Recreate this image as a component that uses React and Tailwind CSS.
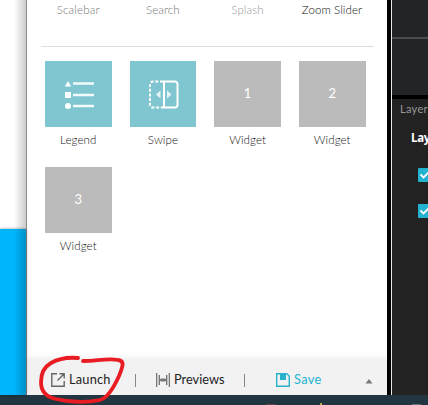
import React from "react";

const categories = [
  { name: "Scalebar", style: "text-[#777] tracking-[0.2px]" },
  { name: "Search", style: "text-[#777] tracking-[0.1px]" },
  { name: "Splash", style: "text-[#999] tracking-[0.1px]" },
  { name: "Zoom Slider", style: "text-[#111] tracking-[0.1px]" },
];

function LegendIcon() {
  return (
    <svg className="relative left-[2px] top-px" width="30" height="30" viewBox="0 0 30 30" fill="white">
      <path d="M3 1 6.2 6.5H-.2Z" />
      <rect x="0" y="12" width="6" height="6" />
      <circle cx="3" cy="26" r="3" />
      <path fillOpacity=".9" d="M8 2.3h21v2.4H8zM8 13.8h21v2.4H8zM8 24.8h21v2.4H8z" />
    </svg>
  );
}

function SwipeIcon() {
  return (
    <svg className="relative left-[1px] top-px" width="30" height="30" viewBox="0 0 30 30" fill="none" stroke="white" strokeWidth="2">
      <path d="M14 1.5H4a3 3 0 0 0-3 3v20a3 3 0 0 0 3 3h10" strokeDasharray="3 1.7" />
      <path d="M15 1.5h11a2.5 2.5 0 0 1 2.5 2.5v21a2.5 2.5 0 0 1-2.5 2.5H15Z" />
      <path d="M11.5 10.5v8L7 14.5ZM18 10.5v8l4.5-4Z" fill="white" fillOpacity=".8" stroke="none" />
    </svg>
  );
}

function Tile({ label, active, children }) {
  return (
    <div className="flex h-[106px] flex-col items-center">
      <div className={`flex h-[66px] w-full items-center justify-center text-[13px] text-white ${active ? "bg-[#80c6d0]" : "bg-[#bbb]"}`}>
        {children}
      </div>
      <span className="mt-[5px] text-[11.5px] font-light leading-4 tracking-[0.1px] text-[#111]">{label}</span>
    </div>
  );
}

function Check() {
  return (
    <div className="flex h-[14px] w-[14px] items-center justify-center rounded-[1px] bg-[#23b3d0]">
      <svg width="12" height="10" viewBox="0 0 12 10" fill="none" stroke="white" strokeWidth="1.8">
        <path d="m1.5 4.5 3 3 5.5-5.5" />
      </svg>
    </div>
  );
}

export default function App() {
  return (
    <div className="relative flex h-[405px] w-[428px] flex-col overflow-hidden bg-[#213640] font-['Lato','Open_Sans',sans-serif]">
      <div className="flex h-[395px] shrink-0">
        <div className="relative flex w-[26px] shrink-0 flex-col">
          <div className="h-[229px] bg-white" />
          <div className="flex-1 bg-[#00b5fb] shadow-[0_0_3px_rgba(0,0,0,0.4)]" />
          <div className="absolute inset-y-0 right-0 w-3 bg-linear-to-r from-black/0 to-black/20" />
        </div>
        <main className="flex w-[361px] shrink-0 flex-col border-l border-black/45 bg-white">
          <div className="flex h-[359px] shrink-0 flex-col px-[14px]">
            <div className="flex h-[47px] w-[333px] border-b border-[#ddd] pl-[4px] pt-[2px]">
              {categories.map((item) => (
                <span key={item.name} className={`mr-[18.1px] w-[66.5px] shrink-0 whitespace-nowrap text-center text-[11.5px] font-light leading-4 ${item.style}`}>{item.name}</span>
              ))}
            </div>
            <div className="ml-[4px] mt-[14px] grid w-[320.5px] grid-cols-4 gap-x-[18.1px]">
              <Tile label="Legend" active><LegendIcon /></Tile>
              <Tile label="Swipe" active><SwipeIcon /></Tile>
              <Tile label="Widget">1</Tile>
              <Tile label="Widget">2</Tile>
              <Tile label="Widget">3</Tile>
            </div>
          </div>
          <footer className="flex h-[36px] shrink-0 items-center bg-[#f2f2f2] pt-[6px] text-[12.8px] text-[#222] shadow-[0_-1px_6px_rgba(0,0,0,0.08)]">
            <div className="ml-[24px] flex w-[84px] items-center gap-[4px]">
              <svg width="14" height="14" viewBox="0 0 14 14" fill="none" stroke="#666" strokeWidth="1.4">
                <path d="M6 .8H.8v12.4h12.4V8M8.5.8h4.7v4.7M13 1 6.5 7.5" />
              </svg>
              <span className="tracking-[0.2px]">Launch</span>
            </div>
            <i className="h-[13px] w-px bg-[#888]" />
            <div className="ml-[20px] flex w-[88px] items-center gap-[4px]">
              <svg width="14" height="14" viewBox="0 0 14 14" fill="#777">
                <path d="M0 0h1.3v14H0zM2.6 2H4v10H2.6zM10 2h1.4v10H10zM12.7 0H14v14h-1.3zM5 5.5h4v3H5z" />
                <path d="M4 5.5 5 6.2v1.6L4 8.5zM10 5.5 9 6.2v1.6l1 .7z" />
              </svg>
              <span>Previews</span>
            </div>
            <i className="h-[13px] w-px bg-[#888]" />
            <div className="ml-[31px] flex w-[89px] items-center gap-[4px] text-[#23b3d0]">
              <svg width="14" height="14" viewBox="0 0 14 14">
                <path d="M.7.7h10.1l2.5 2.5v10.1H.7Z" fill="none" stroke="#28b2cc" strokeWidth="1.4" />
                <path d="M4 1h6v6H4z" fill="#28b2cc" />
              </svg>
              <span className="tracking-[0.3px]">Save</span>
            </div>
            <svg className="relative top-px" width="8" height="5" viewBox="0 0 8 5" fill="#777"><path d="M4 0 7.5 4.5H.5Z" /></svg>
          </footer>
        </main>
        <div className="w-[5px] shrink-0 border-r border-[#e8e8e8] bg-black" />
        <aside className="flex w-[36px] shrink-0 flex-col overflow-hidden bg-[#222]">
          <div className="h-[37px] shrink-0 bg-[#222428]" />
          <div className="h-[2px] shrink-0 bg-[#4a4b4f]" />
          <div className="h-[56px] shrink-0 bg-[#222428]" />
          <div className="h-[4px] shrink-0 bg-black" />
          <span className="ml-[8px] mt-[2px] whitespace-nowrap text-[11px] leading-4 tracking-[0.3px] text-[#999]">Layer</span>
          <span className="ml-[19px] mt-[13px] whitespace-nowrap font-['Open_Sans','Noto_Sans',sans-serif] text-[11.5px] font-bold leading-4 tracking-[-0.3px] text-white">Lay</span>
          <div className="ml-[26px] mt-[22px] flex flex-col gap-[22px]"><Check /><Check /></div>
        </aside>
      </div>
      <div className="flex h-[10px] items-end bg-[#213640]">
        <i className="ml-[266px] h-px w-[10px] rounded bg-[#5b4546]" />
        <i className="ml-[44px] h-[2px] w-[2px] bg-[#b5aa48]" />
        <i className="ml-[90px] h-px w-[9px] bg-[#667075]" />
      </div>
      <svg className="absolute left-0 top-0" width="428" height="405" fill="none" stroke="#e91c23" strokeWidth="3.8" strokeLinecap="round" strokeLinejoin="round">
        <path d="M78 358C67 357 58 359 51 363C44 367 41 374 41 382C41 391 46 397 56 399C68 402 87 403 100 400C108 398 114 387 119 376C123 366 125 361 118 360C108 358 96 361 83 361" />
      </svg>
    </div>
  );
}
